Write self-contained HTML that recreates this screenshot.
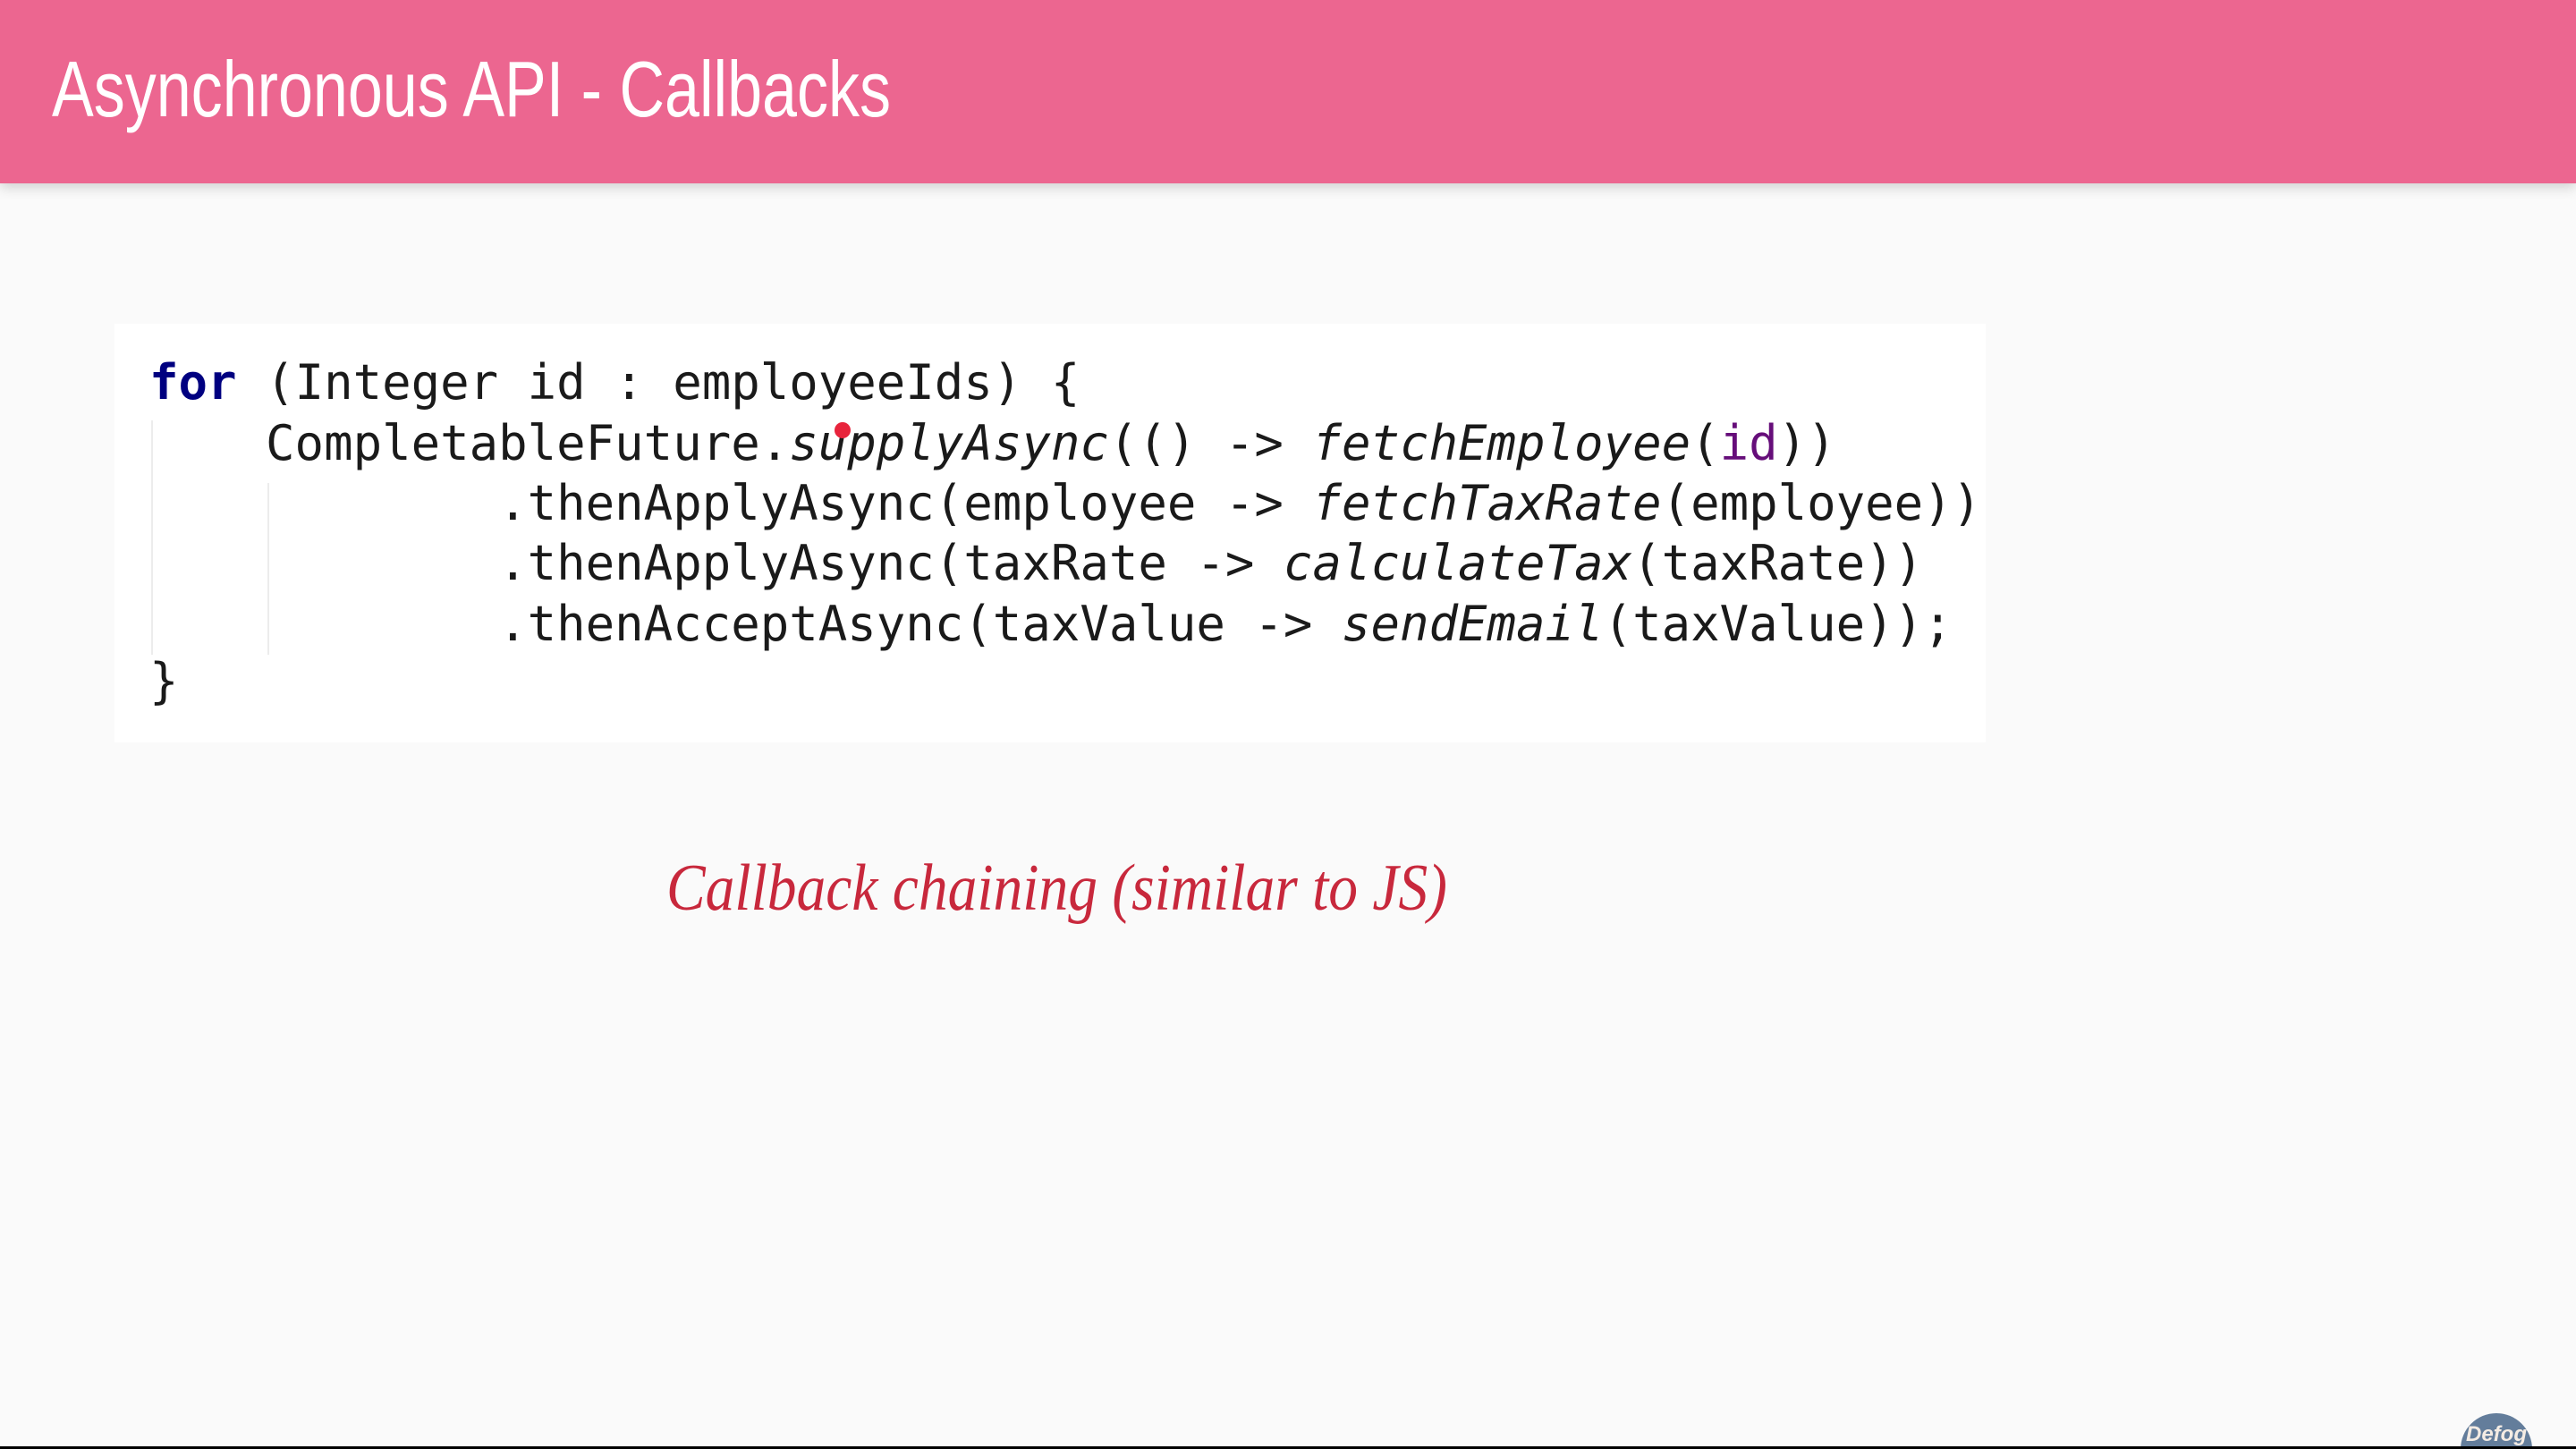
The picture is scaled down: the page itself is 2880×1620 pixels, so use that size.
<!DOCTYPE html>
<html><head><meta charset="utf-8"><style>
html,body{margin:0;padding:0;}
body{width:2880px;height:1620px;background:#fafafa;position:relative;overflow:hidden;}
.hdr{position:absolute;left:0;top:0;width:2880px;height:205px;background:#ec6690;box-shadow:0 4px 14px rgba(0,0,0,0.18);}
.box{position:absolute;left:128px;top:362px;width:2092px;height:468px;background:#fff;}
.ln{position:absolute;left:167px;font-family:"DejaVu Sans Mono","Liberation Mono",monospace;font-size:54px;color:#1a1a1a;white-space:pre;line-height:54px;height:54px;}
i{font-style:italic}
.kw{color:#000080;font-weight:bold}
.pv{color:#660e7a}
.guide{position:absolute;width:2px;background:#ececec;}
</style></head><body>
<div class="hdr"></div>
<svg style="position:absolute;left:0;top:0" width="2880" height="1620">
<text x="58" y="130" font-family="Liberation Sans, sans-serif" font-size="88" fill="#fff" textLength="938" lengthAdjust="spacingAndGlyphs">Asynchronous API - Callbacks</text>
</svg>
<div class="box"></div>
<div class="guide" style="left:169px;top:470px;height:262px"></div>
<div class="guide" style="left:299px;top:540px;height:192px"></div>
<div class="ln" style="top:401px"><span class="kw">for</span> (Integer id : employeeIds) {</div>
<div class="ln" style="top:469px">    CompletableFuture.<i>supplyAsync</i>(() -&gt; <i>fetchEmployee</i>(<span class="pv">id</span>))</div>
<div class="ln" style="top:536px">            .thenApplyAsync(employee -&gt; <i>fetchTaxRate</i>(employee))</div>
<div class="ln" style="top:603px">            .thenApplyAsync(taxRate -&gt; <i>calculateTax</i>(taxRate))</div>
<div class="ln" style="top:671px">            .thenAcceptAsync(taxValue -&gt; <i>sendEmail</i>(taxValue));</div>
<div class="ln" style="top:735px">}</div>
<div style="position:absolute;left:933px;top:472px;width:18px;height:18px;border-radius:50%;background:#e8243c"></div>
<svg style="position:absolute;left:0;top:0" width="2880" height="1620">
<text x="745" y="1017" font-family="Liberation Serif, serif" font-style="italic" font-size="74" fill="#c8283c" textLength="873" lengthAdjust="spacingAndGlyphs">Callback chaining (similar to JS)</text>
<circle cx="2791" cy="1620" r="40" fill="#637d9b"/>
<text x="2791" y="1611" text-anchor="middle" font-family="Liberation Sans, sans-serif" font-style="italic" font-weight="bold" font-size="24" fill="#f4ece4">Defog</text>
<rect x="0" y="1617" width="2880" height="3" fill="#000"/>
</svg>
</body></html>
